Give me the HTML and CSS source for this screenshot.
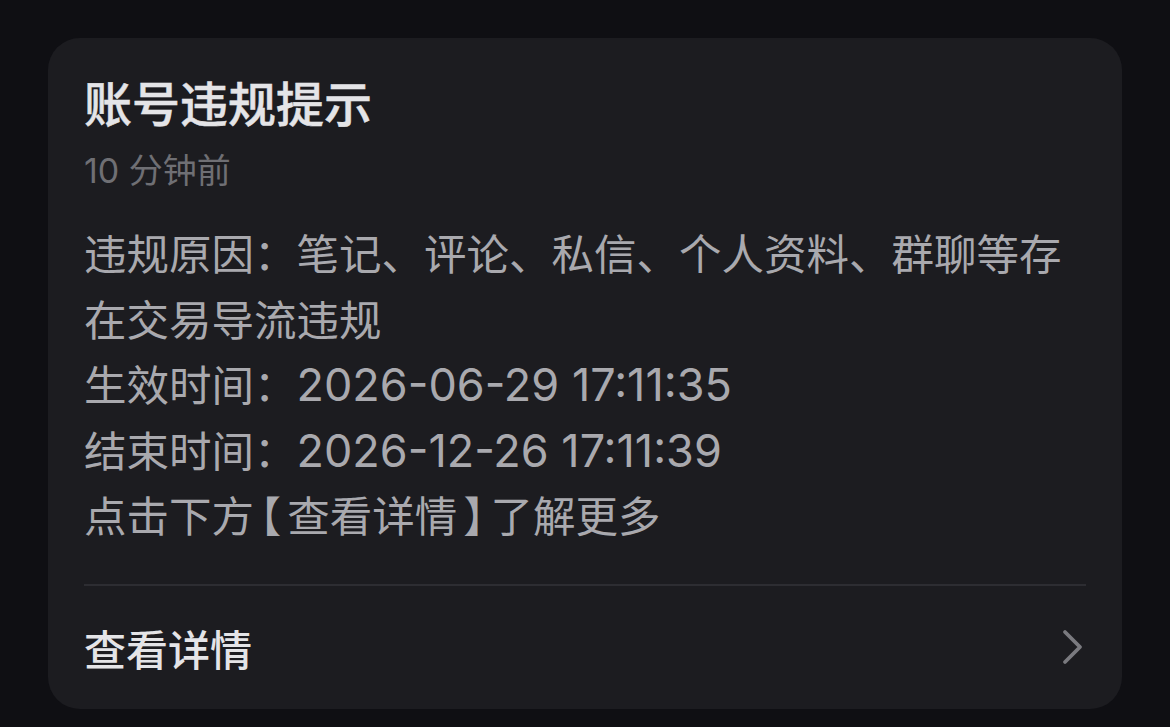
FILE: index.html
```html
<!DOCTYPE html>
<html lang="zh-CN">
<head>
    <meta charset="UTF-8">
    <meta name="viewport" content="width=device-width, initial-scale=1.0">
    <title>账号违规提示</title>
    <link rel="stylesheet" href="styles.css">
</head>
<body>
    <div class="notice-card">
        <div class="notice-body">
            <h1 class="notice-title">账号违规提示</h1>
            <div class="notice-time">10 分钟前</div>

            <div class="notice-content">
                <p>违规原因：笔记、评论、私信、个人资料、群聊等存在交易导流违规</p>
                <p>生效时间：<span class="num">2026-06-29 17:11:35</span></p>
                <p>结束时间：<span class="num">2026-12-26 17:11:39</span></p>
                <p>点击下方<span class="bracket">【</span>查看详情<span class="bracket">】</span>了解更多</p>
            </div>
        </div>

        <div class="notice-divider"></div>

        <a class="notice-link" href="#">
            <span class="link-text">查看详情</span>
            <svg class="link-arrow" width="22" height="36" viewBox="0 0 22 36" fill="none">
                <path d="M3 3 L18 18 L3 33" stroke="currentColor" stroke-width="3.8" stroke-linecap="round" stroke-linejoin="round"/>
            </svg>
        </a>
    </div>
</body>
</html>
```

FILE: styles.css
```css
:root {
    --background: #0f0f13;
    --surface: #1c1c20;
    --divider: #2d2d32;
    --text-primary: #e4e4e7;
    --text-body: #a9a9ae;
    --text-muted: #6f6f74;
}

* {
    margin: 0;
    padding: 0;
    box-sizing: border-box;
}

body {
    background: var(--background);
    font-family: Inter, "Noto Sans CJK SC", sans-serif;
    padding: 38px 48px;
    min-height: 100vh;
}

.notice-card {
    background: var(--surface);
    border-radius: 32px;
    padding: 0 36px;
}

.notice-body {
    padding-top: 37px;
}

.notice-title {
    font-size: 48px;
    line-height: 60px;
    font-weight: 500;
    -webkit-text-stroke: 0.5px var(--text-primary);
    color: var(--text-primary);
}

.notice-time {
    margin-top: 14px;
    font-size: 34px;
    line-height: 44px;
    color: var(--text-muted);
}

.notice-content {
    margin-top: 29px;
    font-size: 42.5px;
    line-height: 65.5px;
    color: var(--text-body);
}

.num {
    font-size: 45px;
    line-height: 1;
}

/* 括号用半宽字形，再补一点间距 */
.bracket {
    font-feature-settings: "halt";
    margin: 0 6px;
}

.notice-divider {
    margin-top: 34px;
    height: 2px;
    background: var(--divider);
}

.notice-link {
    height: 123px;
    display: flex;
    justify-content: space-between;
    align-items: center;
    text-decoration: none;
}

.link-text {
    font-size: 42px;
    font-weight: 500;
    color: var(--text-primary);
}

.link-arrow {
    color: #7a7a7f;
    margin-right: 2px;
}
```
